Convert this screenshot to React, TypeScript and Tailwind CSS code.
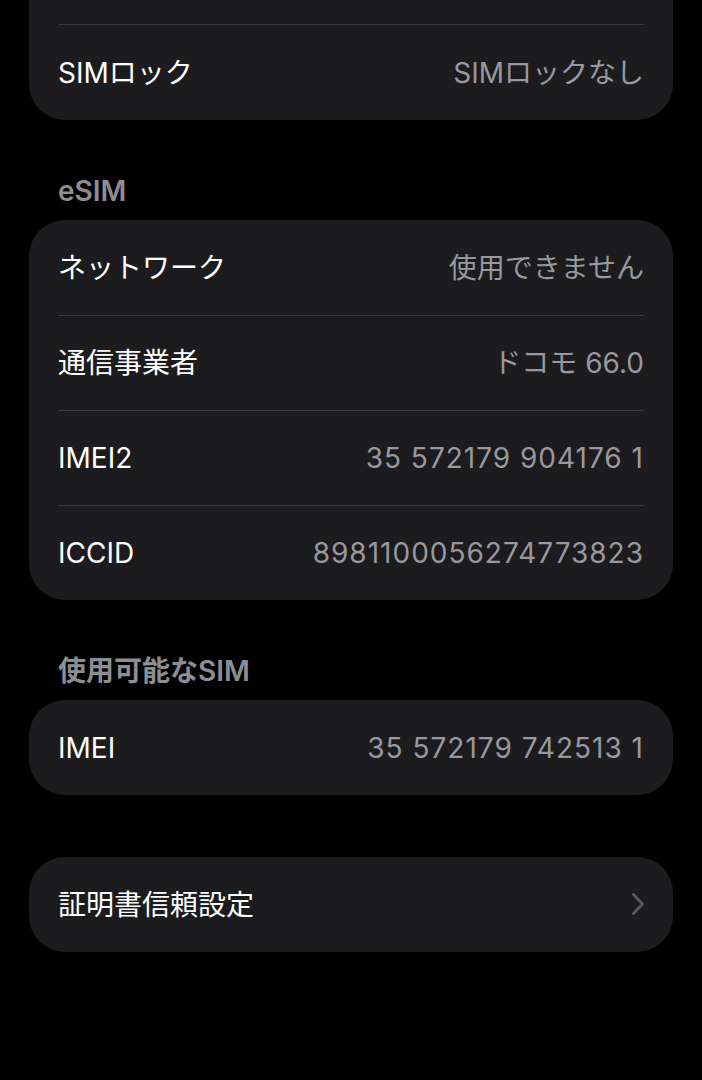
const font = { fontFamily: 'Inter, "Noto Sans CJK JP", sans-serif' };

type Row = { label: string; value?: string; chevron?: boolean };

function Card({ rows, cutTop }: { rows: Row[]; cutTop?: boolean }) {
  return (
    <div
      className={
        "mx-[29px] bg-[#1c1c1e] px-[29px] " +
        (cutTop ? "rounded-b-[36px]" : "rounded-[36px]")
      }
    >
      {cutTop && <div className="h-[25px] border-b border-[#38383a]" />}
      {rows.map((row, i) => (
        <div
          key={row.label}
          className={
            "flex h-[95px] items-center justify-between " +
            (i > 0 ? "border-t border-[#38383a]" : "")
          }
        >
          <span className="text-[28px] text-white">{row.label}</span>
          {row.value && (
            <span
              className={
                "text-[28px] text-[#98989e] " +
                (/^[\d .]+$/.test(row.value) ? "tracking-[1px]" : "")
              }
            >
              {row.value}
            </span>
          )}
          {row.chevron && (
            <svg width="14" height="24" viewBox="0 0 14 24" className="-mr-[1px] mt-[-2px]">
              <path
                d="M2.5 2.5 L11.5 12 L2.5 21.5"
                fill="none"
                stroke="#5b5b60"
                strokeWidth="2.6"
                strokeLinecap="round"
                strokeLinejoin="round"
              />
            </svg>
          )}
        </div>
      ))}
    </div>
  );
}

function Header({ children }: { children: string }) {
  return (
    <div className="px-[58px] pb-[11px] text-[28px] font-semibold text-[#8d8d93] leading-[36px]">
      {children}
    </div>
  );
}

export default function App() {
  return (
    <div className="min-h-screen bg-black pb-[128px]" style={font}>
      <Card cutTop rows={[{ label: "SIMロック", value: "SIMロックなし" }]} />

      <div className="pt-[53px]">
        <Header>eSIM</Header>
        <Card
          rows={[
            { label: "ネットワーク", value: "使用できません" },
            { label: "通信事業者", value: "ドコモ 66.0" },
            { label: "IMEI2", value: "35 572179 904176 1" },
            { label: "ICCID", value: "8981100056274773823" },
          ]}
        />
      </div>

      <div className="pt-[53px]">
        <Header>使用可能なSIM</Header>
        <Card rows={[{ label: "IMEI", value: "35 572179 742513 1" }]} />
      </div>

      <div className="pt-[62px]">
        <Card rows={[{ label: "証明書信頼設定", chevron: true }]} />
      </div>
    </div>
  );
}
